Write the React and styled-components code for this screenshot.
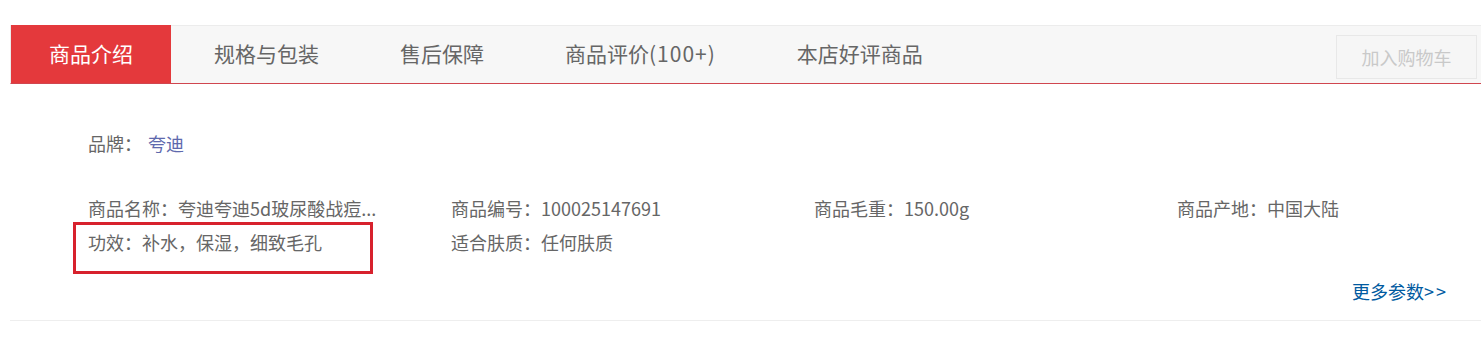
import React from "react";
import styled, { createGlobalStyle } from "styled-components";

const GlobalStyle = createGlobalStyle`
  html, body {
    margin: 0;
    padding: 0;
    background: #fff;
    overflow: hidden;
  }
  body {
    font-family: "Noto Sans CJK SC", "Microsoft YaHei", sans-serif;
    color: #666;
  }
`;

const Page = styled.div`
  padding-top: 25px;
  padding-left: 10px;
`;

const Detail = styled.div`
  width: 1471px;
`;

const TabBar = styled.div`
  display: flex;
  align-items: stretch;
  height: 57px;
  background: #f7f7f7;
  border-top: 1px solid #ececec;
  border-left: 1px solid #ececec;
  border-bottom: 1px solid #d0464f;
`;

const Tabs = styled.ul`
  display: flex;
  gap: 5px;
  margin: 0;
  padding: 0;
  list-style: none;
  flex: 1;
`;

const Tab = styled.li`
  padding: 0 38px;
  margin-top: -1px;
  height: 58px;
  line-height: 56px;
  font-size: 21px;
  color: ${(p) => (p.$active ? "#fff" : "#666")};
  background: ${(p) => (p.$active ? "#e4393c" : "transparent")};
  white-space: nowrap;
`;

const TabExtra = styled.span`
  letter-spacing: 1px;
`;

const CartButton = styled.div`
  align-self: flex-start;
  margin-top: 9px;
  margin-right: 4px;
  width: 141px;
  height: 44px;
  box-sizing: border-box;
  border: 1px solid #e8e8e8;
  background: #f6f6f6;
  color: #c9c9c9;
  font-size: 18px;
  line-height: 42px;
  text-align: center;
`;

const Content = styled.div`
  padding: 42px 33px 12px 78px;
  border-bottom: 1px solid #eee;
`;

const Brand = styled.div`
  font-size: 18px;
  line-height: 34px;
  color: #666;
`;

const BrandLink = styled.span`
  margin-left: 6px;
  color: #5e69ad;
`;

const ParamList = styled.ul`
  display: grid;
  grid-template-columns: repeat(4, 363px);
  margin: 31px 0 0;
  padding: 0;
  list-style: none;
`;

const Param = styled.li`
  position: relative;
  font-size: 18px;
  line-height: 34px;
  color: #666;
  white-space: nowrap;
`;

const Highlight = styled.span`
  position: absolute;
  left: -15px;
  top: -3px;
  width: 300px;
  height: 52px;
  box-sizing: border-box;
  border: 3px solid #d7212d;
  pointer-events: none;
`;

const MoreRow = styled.div`
  display: flex;
  justify-content: flex-end;
  margin-top: 15px;
`;

const MoreLink = styled.a`
  font-size: 18px;
  line-height: 34px;
  color: #005aa0;
  text-decoration: none;
  white-space: nowrap;
`;

const Arrows = styled.span`
  letter-spacing: 2px;
`;

const tabs = [
  { label: "商品介绍" },
  { label: "规格与包装" },
  { label: "售后保障" },
  { label: "商品评价", extra: "(100+)" },
  { label: "本店好评商品" },
];

const params = [
  { text: "商品名称：夸迪夸迪5d玻尿酸战痘..." },
  { text: "商品编号：100025147691" },
  { text: "商品毛重：150.00g" },
  { text: "商品产地：中国大陆" },
  { text: "功效：补水，保湿，细致毛孔", marked: true },
  { text: "适合肤质：任何肤质" },
];

export default function App() {
  return (
    <>
      <GlobalStyle />
      <Page>
        <Detail>
          <TabBar>
            <Tabs>
              {tabs.map((t, i) => (
                <Tab key={t.label} $active={i === 0}>
                  {t.label}
                  {t.extra && <TabExtra>{t.extra}</TabExtra>}
                </Tab>
              ))}
            </Tabs>
            <CartButton>加入购物车</CartButton>
          </TabBar>
          <Content>
            <Brand>
              品牌：<BrandLink>夸迪</BrandLink>
            </Brand>
            <ParamList>
              {params.map((p) => (
                <Param key={p.text}>
                  {p.text}
                  {p.marked && <Highlight />}
                </Param>
              ))}
            </ParamList>
            <MoreRow>
              <MoreLink href="#">
                更多参数<Arrows>&gt;&gt;</Arrows>
              </MoreLink>
            </MoreRow>
          </Content>
        </Detail>
      </Page>
    </>
  );
}
